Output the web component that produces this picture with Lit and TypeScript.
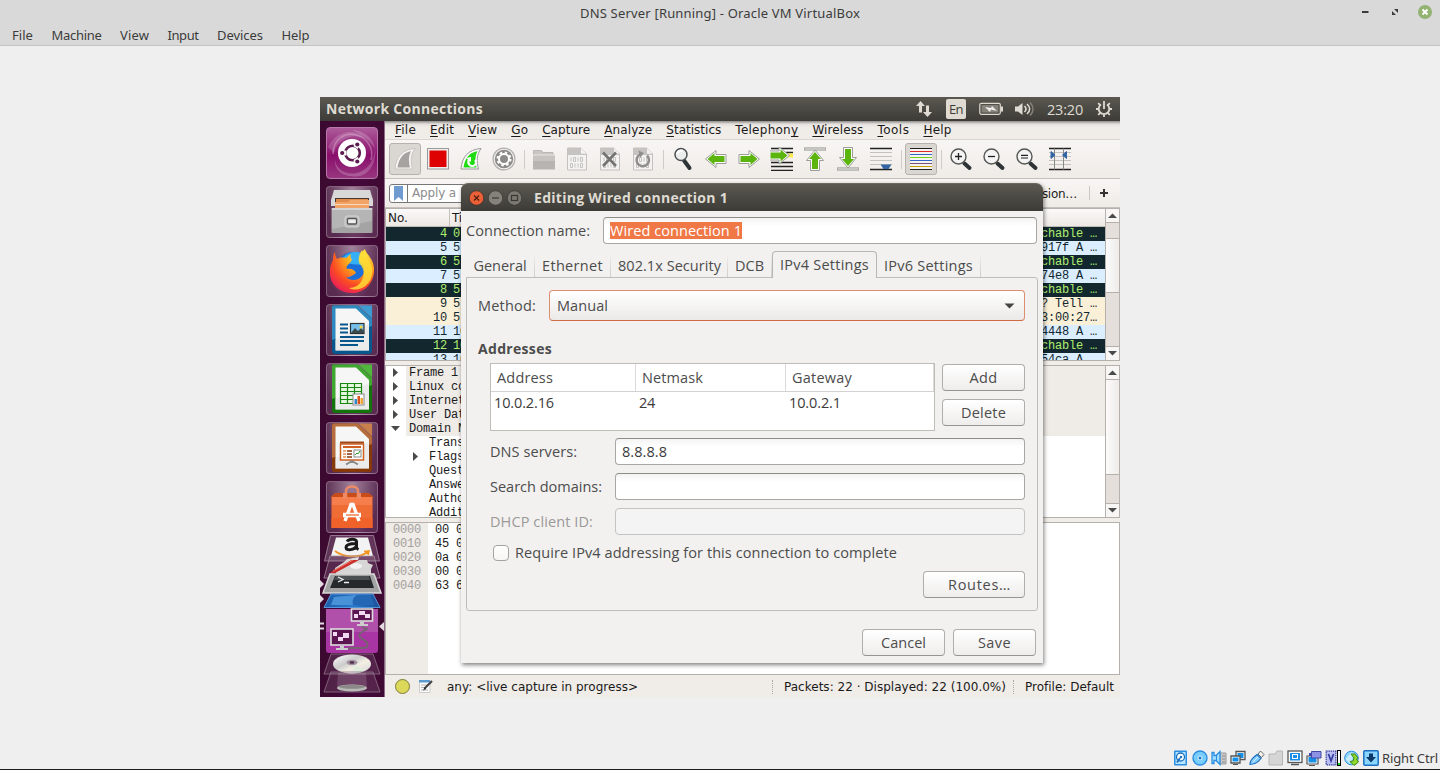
import { LitElement, html, svg, css } from "lit";
import { customElement } from "lit/decorators.js";

const FONTS: Record<string, string> = {
  host: '13px "Noto Sans"',
  ui: '14.5px "Open Sans"',
  uib: 'bold 14px "Open Sans"',
  ws: '12px "DejaVu Sans"',
};
const ruler = document.createElement("canvas").getContext("2d")!;

/* Text tracked so that it takes exactly `width` pixels. */
function fit(text: string, width: number, font: string, accel = -1) {
  ruler.font = FONTS[font];
  const ls = (width - ruler.measureText(text).width) / text.length;
  const body = accel < 0
    ? text
    : html`${text.slice(0, accel)}<u>${text[accel]}</u>${text.slice(accel + 1)}`;
  return html`<span class="t ${font}" style="width:${width}px;letter-spacing:${ls.toFixed(3)}px">${body}</span>`;
}

const base = css`
  *, *::before, *::after { box-sizing: border-box; }
  .t { display: inline-block; white-space: pre; flex: none; }
  .host { font: 13px "Noto Sans", sans-serif; }
  .ui { font: 14.5px "Open Sans", sans-serif; }
  .uib { font: bold 14px "Open Sans", sans-serif; }
  .ws { font: 12px "DejaVu Sans", sans-serif; }
  svg { display: block; flex: none; }
  u { text-underline-offset: 2px; text-decoration-thickness: 1px; }
`;

/* ---------- Launcher ---------- */

const docIcon = (dark: string, light: string, inner: unknown) => svg`
  <path d="M7 1.500H32L46 15V47a3 3 0 0 1-3 3H9a3 3 0 0 1-3-3V3a1.500 1.500 0 0 1 1-1.500z" fill="${dark}"/>
  <path d="M7 1.500H32L46 15V22L6 36V3z" fill="${light}" opacity=".75"/>
  <path d="M9.500 4.500H30L43 17V46.500H9.500z" fill="#f6f6f6"/>
  <path d="M9.500 36L43 20V46.500H9.500z" fill="#e4e4e4" opacity=".6"/>
  <path d="M33 1.500H46V14.500z" fill="${light}"/>
  ${inner}`;

const tiles: [string, unknown][] = [
  ["dash", svg`
    <path d="M7 27C7 12 19 5 30 8c12 3 18 14 15 25" fill="none" stroke="#d59bc8" stroke-width="1.500" opacity=".5"/>
    <path d="M2 20C8 7 22 2 34 7l8 6C30 5 12 10 8 26z" fill="#fff" opacity=".17"/>
    <path d="M9 33c2 12 15 17 27 11 8-4 13-14 13-24 2 14-4 26-15 29C21 51 8 46 9 33z" fill="#fff" opacity=".2"/>
    <path d="M26 3c12 0 22 9 23 19-5-9-14-15-23-19z" fill="#fff" opacity=".2"/>
    <circle cx="26" cy="26" r="14" fill="#fff"/>
    <circle cx="26.500" cy="26" r="7.300" fill="none" stroke="#5c1a4e" stroke-width="2.600"/>
    <path d="M20.500 26h-5M29.500 20.500l2-3M29.500 31.500l2 3" stroke="#fff" stroke-width="5"/>
    <circle cx="16.200" cy="26" r="2.100" fill="#5c1a4e"/><circle cx="31.300" cy="17.500" r="2.100" fill="#5c1a4e"/><circle cx="31.300" cy="34.500" r="2.100" fill="#5c1a4e"/>`],
  ["", svg`
    <path d="M8 4H44L47 14V20H5V14z" fill="#d8d8d8"/><path d="M9 12H43V24H9z" fill="#4a3a34"/>
    <path d="M10 13H42V20H10z" fill="#e08a4c"/><path d="M9 16H22l2-2H43V24H9z" fill="#f0a468"/><path d="M9 18.500H43" stroke="#fbd9b8"/>
    <path d="M5.500 22H46.500V46a1 1 0 0 1-1 1h-39a1 1 0 0 1-1-1z" fill="#a4a4a4"/><path d="M6 22H46V24H6z" fill="#d4d4d4"/>
    <path d="M6 24H46V35L6 43z" fill="#b5b5b5"/>
    <rect x="19" y="30" width="14" height="11" rx="2" fill="#bcbcbc" stroke="#d4d4d4"/><rect x="21.500" y="32.500" width="9" height="5.500" rx="1" fill="#eee" stroke="#555" stroke-width="1.300"/>`],
  ["", svg`
    <defs><radialGradient id="ff" cx=".72" cy=".15" r=".95"><stop offset="0" stop-color="#fff04a"/><stop offset=".4" stop-color="#ffa51c"/><stop offset=".72" stop-color="#fb4a25"/><stop offset="1" stop-color="#e91a5c"/></radialGradient></defs>
    <circle cx="27" cy="23" r="16" fill="#1c6fd8"/><path d="M17 13c5-7 16-8 22-3L36 20 25 19z" fill="#35b0f4"/>
    <path d="M9 7c0 3 1 5 2 7 2-1 5-2 9-1l5-4c-1 3 0 4 1 6l-3 4c-2 1-3 3-2 5 4-1 8 1 9 4-3 2-6 5-10 4 4 4 12 4 16-1 4-5 3-11-3-15 0-5 2-9 6-12 1 5 8 9 9 19 1 14-9 25-22 25C12 48 3 38 4 26c0-6 2-9 3-11 0-3 0-5 2-8z" fill="url(#ff)"/>
    <path d="M36 5c-3 4-4 8-3 13 5 5 6 11 3 17-2 5-8 8-13 8 10 5 22-3 23-14C48 18 39 13 36 5z" fill="#ffdb35" opacity=".85"/>`],
  ["", docIcon("#07568c", "#3c9bd0", svg`
    <path d="M14 20.500h8M14 24.500h8M14 28.500h8M14 33h24M14 37h24M14 41h18" stroke="#07568c" stroke-width="2"/>
    <rect x="24.500" y="19.500" width="13.500" height="10" fill="#74c0ea" stroke="#2e3436" stroke-width="1.200"/><path d="M25 29l4-5 3 3 3-3 3 3v2z" fill="#3b4a4c"/><circle cx="35" cy="23" r="1.600" fill="#f8d53a"/>`)],
  ["", docIcon("#14740c", "#4fb83c", svg`
    <rect x="14" y="20" width="22" height="20" fill="#e5f7df"/><path d="M14 20.500h22M14 24.500h22M14 28.500h22M14 32.500h22M14 36.500h22M14 40.500h22M14.500 20v21M21.500 20v20M28.500 20v20M35.500 20v20" stroke="#18860f" stroke-width="1.200"/>
    <rect x="27" y="31" width="11" height="11" fill="#fff" stroke="#888"/><path d="M28.500 36h2.500v5h-2.500z" fill="#2e88c8"/><path d="M31.500 33h2.500v8h-2.500z" fill="#d8521c"/><path d="M34.500 35h2.500v6h-2.500z" fill="#efa530"/>`)],
  ["", docIcon("#85390b", "#c87f4c", svg`
    <rect x="14.500" y="22" width="23" height="16" fill="#fff" stroke="#d05f20" stroke-width="1.500"/><path d="M14 20.500h24" stroke="#a0481a" stroke-width="2"/><path d="M17 25h18" stroke="#d05f20" stroke-width="2"/>
    <path d="M17 29h3M17 32h3M17 35h3" stroke="#e48a50" stroke-width="1.600"/><path d="M21 29h5M21 32h5M21 35h5" stroke="#85390b" stroke-width="1.600"/>
    <rect x="28" y="28" width="7" height="7" fill="#fff" stroke="#888"/><path d="M29 33l2-2 1 1 2-3" stroke="#299b26" fill="none"/>
    <path d="M26 38v2M26 39l-6 3.500M26 39l6 3.500" stroke="#888" stroke-width="2"/>`)],
  ["", svg`
    <path d="M5.500 15H46.500V47H5.500z" fill="#ef6c35"/><path d="M5.500 37H46.500V47H5.500z" fill="#f0622a"/><path d="M5.500 15L9 12H43L46.500 15V17H5.500z" fill="#c84c1a"/><path d="M6 16H46V24H6z" fill="#f57e4c"/>
    <path d="M20 17V10c0-6 12-6 12 0v7" fill="none" stroke="#ef8a66" stroke-width="2.500"/><path d="M18 18v-6M34 18v-6" stroke="#ef8a66" stroke-width="2"/>
    <path d="M19 40L25 23.500H27L33 40" fill="none" stroke="#fff" stroke-width="3.400"/><path d="M17 34H35" stroke="#fff" stroke-width="4.500"/><path d="M20 34h13" stroke="#ef6c35" stroke-width="1.300"/>`],
];

@customElement("unity-launcher")
class UnityLauncher extends LitElement {
  static styles = [base, css`
    :host { display: flex; flex-direction: column; width: 65px; padding-top: 6px; background: linear-gradient(90deg, #3b0a30, #45083a 60%, #3e0a33); border-right: 1px solid #8f6a87; overflow: hidden; }
    .tile { flex: none; width: 52px; height: 52px; margin: 0 0 7px 6px; border-radius: 4px; border: 1px solid rgba(255,255,255,.25); background: radial-gradient(ellipse at 50% 0, rgba(255,255,255,.5), rgba(255,255,255,.14) 80%); }
    .tile svg { margin: -1px; }
    .dash { background: linear-gradient(#ad5b9a, #8a0f6c 55%, #97367f); border-color: #b878aa; }
    .stack { margin-top: -6px; }
  `];
  render() {
    return html`${tiles.map(([c, i]) => html`<div class="tile ${c}"><svg width="52" height="52" viewBox="0 0 52 52">${i}</svg></div>`)}
      <svg class="stack" width="64" height="163" viewBox="0 0 64 163">
        <defs>
          <linearGradient id="cd" x1="0" y1="0" x2="1" y2="1"><stop offset="0" stop-color="#fff"/><stop offset=".4" stop-color="#ccc"/><stop offset=".6" stop-color="#f4efe4"/><stop offset="1" stop-color="#d5d5d8"/></linearGradient>
          <linearGradient id="bl" x1="0" y1="0" x2="1" y2="0"><stop offset="0" stop-color="#1d5ca8"/><stop offset=".5" stop-color="#2a7ad0"/><stop offset="1" stop-color="#1c4f96"/></linearGradient>
        </defs>
        <path d="M10.500 1.500H53.500L59.500 27H4.500z" fill="#fff" fill-opacity=".18" stroke="#a58b9e" stroke-width=".8"/>
        <path d="M16 3.500H48L53 22H11z" fill="#f3f3f3"/>
        <path d="M27 7.500c2-3 9-3 9.500 0v6c0 1 1 1.500 2 2M36 9.500c-8 0-10 1.500-10 4 0 4 9 2 10-1" fill="none" stroke="#1a1a1a" stroke-width="3"/>
        <path d="M15 17c9 7 24 7 33 1M44 17.500l5-.5-1 4" fill="none" stroke="#f2941e" stroke-width="1.700"/>
        <path d="M10 22H54L60 44H4z" fill="#fff" fill-opacity=".13" stroke="#a58b9e" stroke-width=".8"/>
        <path d="M24 28l3-3 7-1 4 2 9 0 1 3 5 2-2 4 0 5H16l-1-6z" fill="#d6d6d6"/><ellipse cx="36" cy="32" rx="6" ry="3" fill="#f2f2f2"/>
        <path d="M11 38L34 24.500l5 1.500L16 38.500c-2 1.500-6 1.500-5-.5z" fill="#cc2f2a"/><path d="M13 37L33 26" stroke="#ee7a70"/><path d="M31 26l2-2 6-1-1 3z" fill="#dedede"/>
        <path d="M10 40H54L61 59H3z" fill="#a3a3a3"/><path d="M10 40H54L61 59H3z" fill="none" stroke="#d9d9d9" stroke-width="1.500"/>
        <path d="M15 42H50L54 54H10z" fill="#25292b"/><path d="M16 42h33l1 4H14z" fill="#4b5052"/><path d="M18 43l5 2.500-5 2.500M24 48.500h5" stroke="#eee" stroke-width="1.300" fill="none"/>
        <path d="M11 60H53L60 73.500H4z" fill="url(#bl)" stroke="#5697db"/><path d="M15 61H50L54 71H10z" fill="#2367b5"/><path d="M36 62c-3 1-4 5-3 9H11l3-8 22-2z" fill="#58a0e4" opacity=".75"/>
        <path d="M6 75H58V116a3 3 0 0 1-3 3H9a3 3 0 0 1-3-3z" fill="#a934a3"/><path d="M6 75H58V98H6z" fill="#b45cad" opacity=".7"/>
        <rect x="31.500" y="75" width="21" height="12" fill="#5d1552" stroke="#ddd" stroke-width="1.600"/><path d="M34 80h4v4h-4zM39 77h6v4h-6zM45 80h5v4h-5z" fill="#f1d9ef"/><path d="M40 88h4v2h4v2H37v-2h3z" fill="#ccc"/>
        <path d="M28 114h15c7 0 5-6 1-8-6-3-6-6-2-8l5-3-5-2" fill="none" stroke="#74646f" stroke-width="1.800"/>
        <rect x="11" y="95" width="22" height="16" fill="#5d1552" stroke="#ddd" stroke-width="1.600"/><path d="M13 98h4v4h-4zM18 103h5v4h-5zM23 99h6v5h-6z" fill="#f1d9ef"/><path d="M20 112h4v2h4v2H16v-2h4z" fill="#ccc"/>
        <path d="M11 120H53L60 140H4z" fill="#fff" fill-opacity=".1" stroke="#8f7389" stroke-width=".8"/>
        <ellipse cx="32" cy="130" rx="19" ry="9.500" fill="url(#cd)"/><path d="M32 130l13 6c-4 3-8 3-10 3z" fill="#d8f0d8" opacity=".7"/><ellipse cx="32" cy="128.500" rx="5.500" ry="2.800" fill="#a593a3"/><ellipse cx="32" cy="128.500" rx="2.500" ry="1.300" fill="#4b2e46"/>
        <path d="M11 138H53L60 158H4z" fill="#fff" fill-opacity=".1" stroke="#8f7389" stroke-width=".8"/>
        <path d="M18 139H46L47 153H17z" fill="#fff" opacity=".15"/><ellipse cx="32" cy="154" rx="15" ry="3.500" fill="#b9bab8"/><ellipse cx="32" cy="152.800" rx="13" ry="2" fill="#8b8a89"/>
        <path d="M0 46l4 4-4 4zM0 61l4 4-4 4zM0 88.500h4v2H0zM0 93.500h4v2H0zM64 88v9l-5-4.500z" fill="#e5dce3"/>
      </svg>`;
  }
}

/* ---------- Wireshark ---------- */

const arrow = (rot: number, cx = 12, cy = 12) => svg`
  <path transform="translate(${cx} ${cy}) rotate(${rot})" d="M-10 -4.500H0V-8.500L10.500 0 0 8.500V4.500H-10z" fill="#fff" stroke="#9b9d96" stroke-width="1" stroke-linejoin="round"/>
  <path transform="translate(${cx} ${cy}) rotate(${rot})" d="M-8.500 -3H1.500V-6L8.500 0 1.500 6V3H-8.500z" fill="#5cb40e"/>`;
const page = svg`
  <path d="M2.500 1H16L21.500 6.500V23H2.500z" fill="#f3f2f1" stroke="#c4c2bf"/><path d="M2.500 1H16V6.500H21.500V8H2.500z" fill="#c6c4c1"/><path d="M16 1V6.500h5.500z" fill="#f3f2f1"/>
  <path d="M6 10.500v4M8.500 10.500h2v4h-2zM13 10.500v4M15.500 10.500h2v4h-2zM5.500 16.500h2v4h-2zM10 16.500v4M13 16.500v4M15.500 16.500h2v4h-2z" fill="none" stroke="#c0bebb" stroke-width=".9"/>`;
const lens = (inner: unknown) => svg`
  <path d="M15.500 16.500L20.500 21" stroke="#2e3436" stroke-width="4" stroke-linecap="round"/><circle cx="9.500" cy="9.500" r="7.500" fill="#f4f4f4" stroke="#555753" stroke-width="1.400"/>${inner}`;
const fin = "M2 22C3 10 9 2.500 22 1.500 17.500 8 17.500 14 19.500 22z";

const tools: [string, unknown][] = [
  ["on", svg`<path d="${fin}" fill="#f6f5f4" stroke="#c9c5c1"/><path d="M4.500 20.500C6 11 10 6 18 4 15.500 9 15.500 14 17 20.500z" fill="#a5a29f"/>`],
  ["", svg`<rect x="1.500" y="1.500" width="21" height="20.500" fill="#eee" stroke="#9a9a9a"/><rect x="3.500" y="3.500" width="17" height="16.500" fill="#de0202"/>`],
  ["", svg`<path d="${fin}" fill="#fafafa" stroke="#999"/><path d="M4.500 20.500C6 11 10 6 18.500 4 16 9 16 14 17.500 20.500z" fill="#1edc10"/><path d="M10 12.500c-2 4 1 7 4 6.500 3-.5 4-4 2-6" fill="none" stroke="#fff" stroke-width="2.200"/><path d="M7 11l5-1 0 5z" fill="#fff"/>`],
  ["", svg`<circle cx="12" cy="12" r="10.900" fill="#f4f4f3" stroke="#b1afac" stroke-width="1.200"/><circle cx="12" cy="12" r="9.200" fill="#8d8b89"/><circle cx="12" cy="12" r="5" fill="none" stroke="#fff" stroke-width="2"/><circle cx="12" cy="12" r="6.500" fill="none" stroke="#fff" stroke-width="2" stroke-dasharray="2.500 2.600"/>`],
  ["|", 0],
  ["", svg`<path d="M1.500 5V3.500h8l1.500 2h10V9h-19.500z" fill="#c9c6c3" stroke="#b9b6b3"/><rect x="1" y="8" width="22" height="14.500" fill="#b7b4b1"/><rect x="1" y="8" width="22" height="6" fill="#c6c3c0"/><path d="M1 8h22" stroke="#e6e4e2"/>`],
  ["", page],
  ["", svg`${page}<path d="M5 5.500L18 19M18 5.500L5 19" stroke="#757370" stroke-width="2.600"/>`],
  ["", svg`${page}<path d="M16 8.500a6.200 6.200 0 1 1-7-1" fill="none" stroke="#908e8b" stroke-width="2.500"/><path d="M7.500 3.500l5.500 2.500-4 5z" fill="#908e8b"/>`],
  ["|", 0],
  ["", svg`<path d="M13 13.500L18.500 21" stroke="#2e3436" stroke-width="4" stroke-linecap="round"/><circle cx="10" cy="7.500" r="6" fill="#ececec" stroke="#4c5052" stroke-width="1.500"/><path d="M6 7c1-3 4-4 6-3" stroke="#fff" stroke-width="2" fill="none"/>`],
  ["", arrow(180)],
  ["", arrow(0)],
  ["", svg`<path d="M1 1.500h22M16 5.500h7M1 15.500h22M1 19.500h22M1 23.300h22" stroke="#222" stroke-width="1.300"/><path d="M1 11.500h14" stroke="#bbb"/><path d="M14 6.500h9v4h-9z" fill="#fce94f"/>${arrow(0, 9, 8.500)}`],
  ["", svg`<path d="M1 2h22" stroke="#8e9089" stroke-width="3"/><path d="M1.500 2h21" stroke="#fff"/>${arrow(-90, 12, 13.500)}`],
  ["", svg`<path d="M1 22h22" stroke="#8e9089" stroke-width="3"/><path d="M1.500 22h21" stroke="#fff"/>${arrow(90, 12, 10.500)}`],
  ["", svg`<path d="M1 1.500h22M1 22.500h22" stroke="#222" stroke-width="1.400"/><path d="M1 5.500h22M1 9.500h22M1 13.500h22M1 17.500h22" stroke="#c4c2bf" stroke-width="1"/><path d="M11.500 17.500h11l-3 4.500h-5z" fill="#3465a4"/>`],
  ["|", 0],
  ["on", svg`<path d="M1 2h22v20.500H1z" fill="#f4f3f2"/><path d="M1 1.500h22M1 22.500h22" stroke="#222" stroke-width="1"/><path d="M1 4.500h22" stroke="#e02a2a"/><path d="M1 7.500h22M1 13.500h22" stroke="#3465c4"/><path d="M1 10.500h22" stroke="#73d216"/><path d="M1 16.500h22" stroke="#75507b"/><path d="M1 19.500h22" stroke="#c4a000"/>`],
  ["|", 0],
  ["", lens(svg`<path d="M6 9.500h7M9.500 6v7" stroke="#222" stroke-width="1.300"/>`)],
  ["", lens(svg`<path d="M6 9.500h7" stroke="#222" stroke-width="1.300"/>`)],
  ["", lens(svg`<path d="M6 8.300h7M6 11h7" stroke="#222" stroke-width="1.200"/>`)],
  ["", svg`<path d="M1 5.500h22M1 9.500h22M1 13.500h22M1 17.500h22" stroke="#c4c2bf" stroke-width="1"/><path d="M1 1.500h22M1 22.500h22" stroke="#222" stroke-width="1.400"/><path d="M6.500 1.500v21M15.500 1.500v21" stroke="#888a85"/><path d="M3 4.500l4 3.500-4 3.500zM18.500 4.500L14.500 8l4 3.500z" fill="#3465a4" stroke="#3465a4"/>`],
];

const menus: [string, number, number][] = [
  ["File", 21, 0], ["Edit", 24, 0], ["View", 29, 0], ["Go", 17, 0], ["Capture", 48, 0], ["Analyze", 48, 0],
  ["Statistics", 55, 0], ["Telephony", 63, 8], ["Wireless", 51, 0], ["Tools", 32, 0], ["Help", 28, 0],
];
const packets = [
  ["4", "0", "chable …", "err"], ["5", "5", "917f A …", "dns"], ["6", "5", "chable …", "err"], ["7", "5", "74e8 A …", "dns"],
  ["8", "5", "chable …", "err"], ["9", "5", "? Tell …", "arp"], ["10", "5", "3:00:27…", "arp"], ["11", "10", "4448 A …", "dns"],
  ["12", "10", "chable …", "err"], ["13", "10", "54ca A …", "dns"],
];
const tree: [string, string, string][] = [
  ["Frame 1", "top", "r"], ["Linux co", "top", "r"], ["Internet", "top", "r"], ["User Dat", "top", "r"], ["Domain N", "top", "d"],
  ["Trans", "sub", ""], ["Flags", "sub", "r"], ["Quest", "sub", ""], ["Answe", "sub", ""], ["Autho", "sub", ""], ["Addit", "sub", ""],
];
const hex = [["0000", "00 0"], ["0010", "45 0"], ["0020", "0a 0"], ["0030", "00 0"], ["0040", "63 6"]];

const tri = (d: string) => html`<svg width="9" height="9" viewBox="0 0 9 9"><path d="${d}" fill="#4a4a4a"/></svg>`;
const UP = "M0 7L4.500 2.500 9 7z", DOWN = "M0 2L4.500 6.500 9 2z", RIGHT = "M2 0v9l5-4.500z", OPEN = "M0 2h9L4.500 7z";

@customElement("shark-window")
class SharkWindow extends LitElement {
  static styles = [base, css`
    :host { display: flex; flex-direction: column; flex: 1; min-width: 0; background: #f0ece8; color: #1a1a1a; }
    .menu { display: flex; gap: 14.05px; height: 19px; padding: 2px 0 0 10px; background: linear-gradient(#8d8b88, #e2dfdc 3px, #f0ece8 6px); border-bottom: 1px solid #dbd6d1; }
    .tools { display: flex; align-items: center; height: 39px; padding-left: 4px; background: linear-gradient(#f8f6f4, #efebe7); border-bottom: 1px solid #c5c0bb; }
    .tool { display: flex; align-items: center; justify-content: center; width: 32px; height: 32px; margin-right: 1px; border: 1px solid transparent; border-radius: 3px; }
    .on { background: #dad7d3; border-color: #b6b2ae; }
    .sep { width: 1px; height: 19px; margin: 0 3px; background: #d0cbc6; }
    .filter { display: flex; align-items: center; height: 29px; padding: 0 11px 0 4px; border-bottom: 1px solid #c5c0bb; background: linear-gradient(#f8f6f4, #efebe7); }
    .entry { display: flex; align-items: center; width: 600px; height: 19px; border: 1px solid #777; border-radius: 3px; background: #fff; color: #8c8c8c; }
    .mark { display: flex; justify-content: center; align-items: center; width: 18px; height: 17px; border-right: 1px solid #777; margin-right: 4px; }
    .expr { margin-left: auto; }
    .fsep { width: 1px; height: 14px; background: #ccc7c2; margin: 0 9px 0 12px; }
    .pane { display: flex; height: 153px; border: 1px solid #b5b0ab; background: #fff; overflow: hidden; font: 12px/14px "Liberation Mono", monospace; letter-spacing: -.2px; }
    .body { flex: 1; min-width: 0; overflow: hidden; }
    .head { display: flex; height: 18px; background: linear-gradient(#fbfafa, #ece8e4); border-bottom: 1px solid #c0bbb6; font: 12px/17px "DejaVu Sans", sans-serif; letter-spacing: -.1px; }
    .h1 { width: 64px; padding: 1px 0 0 2px; border-right: 1px solid #c5c0bb; } .h2 { padding: 1px 0 0 2px; }
    .row { display: flex; height: 14px; white-space: pre; }
    .no { width: 61px; text-align: right; } .tm { margin-left: 6px; } .info { margin-left: auto; margin-right: 8px; }
    .err { background: #12272e; color: #b0ee70; } .dns { background: #daeeff; color: #12272e; } .arp { background: #faf0d7; color: #12272e; }
    .bar { width: 14px; border-left: 1px solid #b5b0ab; background: #e4dfdb; display: flex; flex-direction: column; }
    .btn { height: 14px; display: flex; align-items: center; justify-content: center; background: #f8f6f5; border-bottom: 1px solid #b5b0ab; }
    .btn.dn { margin-top: auto; border-bottom: 0; border-top: 1px solid #b5b0ab; }
    .thumb { background: linear-gradient(90deg, #fcfbfb, #eeebe8); border: solid #b5b0ab; border-width: 1px 0; }
    .list .thumb { margin-top: 15px; height: 55px; } .details .thumb { height: 95px; border-top: 0; }
    .details { margin-top: 4px; } .bytes { margin-top: 4px; }
    .tr { display: flex; align-items: center; height: 14px; white-space: pre; }
    .ar { display: flex; justify-content: center; width: 20px; padding-right: 2px; margin-top: -1px; }
    .sub .ar { margin-left: 20px; width: 20px; }
    .lbl { flex: 1; padding-left: 3px; } .top .lbl { background: #efebe7; }
    .off { width: 42px; padding: 0 0 0 7px; background: #efebe7; color: #a3a09d; white-space: pre; }
    .hx { padding-left: 7px; white-space: pre; }
    .status { display: flex; align-items: center; height: 22px; padding: 1px 6px 0 9px; }
    .led { width: 15px; height: 15px; border-radius: 50%; border: 1px solid #7f7d3a; background: #dcd85a; margin: -1px 8px 0 1px; }
    .note { margin: -2px 13px 0 0; }
    .dots { width: 0; height: 14px; border-left: 1px dotted #aaa; }
    .d1 { margin: 0 11px 0 auto; } .d2 { margin: 0 11px 0 7px; }
  `];
  bar() {
    return html`<div class="bar"><div class="btn">${tri(UP)}</div><div class="thumb"></div><div class="btn dn">${tri(DOWN)}</div></div>`;
  }
  render() {
    return html`
      <div class="menu">${menus.map(([n, w, a]) => fit(n, w, "ws", a))}</div>
      <div class="tools">${tools.map(([c, i]) => c === "|" ? html`<div class="sep"></div>` : html`<div class="tool ${c}"><svg width="24" height="24" viewBox="0 0 24 24">${i}</svg></div>`)}</div>
      <div class="filter">
        <div class="entry"><div class="mark"><svg width="9" height="15" viewBox="0 0 9 15"><path d="M0 0H9V15L4.500 11 0 15z" fill="#6f9bd0"/></svg></div>${fit("Apply a", 44, "ws")}</div>
        <div class="expr">${fit("Expression…", 74, "ws")}</div><div class="fsep"></div>
        <svg width="10" height="10" viewBox="0 0 10 10"><path d="M5 1v8M1 5h8" stroke="#333" stroke-width="2"/></svg>
      </div>
      <div class="pane list"><div class="body">
        <div class="head"><div class="h1">No.</div><div class="h2">Ti</div></div>
        ${packets.map(p => html`<div class="row ${p[3]}"><span class="no">${p[0]}</span><span class="tm">${p[1]}</span><span class="info">${p[2]}</span></div>`)}
      </div>${this.bar()}</div>
      <div class="pane details"><div class="body">
        ${tree.map(([l, c, a]) => html`<div class="tr ${c}"><span class="ar">${a ? tri(a === "r" ? RIGHT : OPEN) : ""}</span><span class="lbl">${l}</span></div>`)}
      </div>${this.bar()}</div>
      <div class="pane bytes"><div class="off">${hex.map(h => html`<div>${h[0]}</div>`)}</div><div class="hx">${hex.map(h => html`<div>${h[1]}</div>`)}</div></div>
      <div class="status"><div class="led"></div>
        <svg class="note" width="16" height="16" viewBox="0 0 16 16"><path d="M1.500 2.500H12V14.500H1.500z" fill="#fafafa" stroke="#ccc"/><path d="M1 2h11v2.500H1z" fill="#5b9bd0"/><path d="M3 7h6M3 9.500h5M3 12h7" stroke="#b5b5b5"/><path d="M6.500 10.500L14 3" stroke="#444" stroke-width="2.200"/><path d="M5 12.500l1.500-3 1.500 1.500z" fill="#222"/></svg>
        ${fit("any: <live capture in progress>", 191, "ws")}
        <div class="dots d1"></div>${fit("Packets: 22 · Displayed: 22 (100.0%)", 222, "ws")}<div class="dots d2"></div>${fit("Profile: Default", 89, "ws")}
      </div>`;
  }
}

/* ---------- Connection editor ---------- */

@customElement("edit-dialog")
class EditDialog extends LitElement {
  static styles = [base, css`
    :host { display: flex; flex-direction: column; width: 582px; height: 480px; background: #f2f1f0; color: #4c4c4c; border-radius: 7px 7px 0 0; box-shadow: 1px 2px 4px rgba(0,0,0,.5); }
    .title { display: flex; align-items: center; height: 28px; padding-left: 8px; border-radius: 7px 7px 0 0; background: linear-gradient(#5a5850, #3c3b37); border-top: 1px solid #6a685f; color: #dfdbd2; }
    .title svg { margin-right: 4px; } .title .t { margin-left: 8px; }
    .name { display: flex; align-items: center; justify-content: space-between; height: 27px; margin: 6px 6px 0 5px; }
    .field { display: flex; align-items: center; height: 27px; padding: 0 6px; border: 1px solid #a9a7a4; border-top-color: #8e8c89; border-radius: 4px; background: linear-gradient(#f4f4f4, #fff 8px); color: #3c3c3c; }
    .main { width: 434px; } .sel { display: flex; align-items: center; height: 17px; background: #f07746; color: #fff; }
    .tabs { display: flex; align-items: flex-end; height: 27px; margin: 7px 5px -1px; z-index: 1; }
    .tab { display: flex; align-items: center; justify-content: center; height: 23px; border-right: 1px solid transparent; border-image: linear-gradient(transparent, #ccc9c6) 1; margin-bottom: 1px; }
    .tab.act { border: 1px solid #b9b7b4; border-image: none; border-bottom: 0; border-radius: 4px 4px 0 0; height: 27px; margin: 0; background: #f2f1f0; padding-bottom: 1px; }
    .w0 { width: 69px; } .w1 { width: 76px; } .w2 { width: 117px; padding-left: 1px; } .w3 { width: 44px; } .w4 { width: 105px; } .w5 { width: 104px; }
    .page { height: 334px; margin: 0 5px; padding: 12px 12px 0 11px; border: 1px solid #bfbdba; border-radius: 0 3px 3px 3px; }
    .method { display: flex; align-items: center; justify-content: space-between; }
    .combo { display: flex; align-items: center; justify-content: space-between; width: 476px; height: 31px; padding: 0 9px 0 7px; border: 1px solid #dc8f70; border-bottom-color: #cf6a42; border-radius: 4px; background: linear-gradient(#fff, #eceae8); }
    .sec { display: flex; margin: 18px 0 4px; height: 20px; }
    .sub { margin-left: 12px; }
    .addr { display: flex; justify-content: space-between; height: 68px; }
    .table { width: 445px; border: 1px solid #bfbdba; background: #fff; }
    .thead, .trow { display: grid; grid-template-columns: 145px 150px 1fr; align-items: center; }
    .thead { height: 28px; border-bottom: 1px solid #d4d2d0; }
    .th { height: 27px; display: flex; align-items: center; padding-left: 6px; border-right: 1px solid #dcdad8; }
    .td { padding-left: 3px; height: 21px; display: flex; align-items: center; color: #3c3c3c; }
    .btns { display: flex; flex-direction: column; gap: 8px; padding-top: 1px; }
    .b { display: flex; align-items: center; justify-content: center; width: 83px; height: 27px; border: 1px solid #b0aeab; border-bottom-color: #969491; border-radius: 4px; background: linear-gradient(#fff, #efedec); }
    .wide { width: 102px; margin-left: auto; margin-top: 9px; padding-left: 11px; }
    .line { display: flex; align-items: center; justify-content: space-between; margin-top: 8px; }
    .line.first { margin-top: 7px; }
    .line .field { width: 410px; }
    .dis { color: #9b9997; } .dis .field { background: #f4f4f4; border-color: #c5c3c1; }
    .check { display: flex; align-items: center; margin-top: 9px; height: 18px; padding-left: 3px; }
    .check .t { margin-top: -2px; }
    .box { width: 16px; height: 16px; border: 1px solid #a5a3a0; border-radius: 4px; background: linear-gradient(#fff, #f6f5f4); margin-right: 6px; }
    .foot { display: flex; justify-content: flex-end; gap: 8px; margin: 18px 7px 0; }
  `];
  render() {
    const tabs: [string, number][] = [["General", 53], ["Ethernet", 61], ["802.1x Security", 103], ["DCB", 29], ["IPv4 Settings", 89], ["IPv6 Settings", 89]];
    return html`
      <div class="title">
        <svg width="15" height="16" viewBox="0 0 15 16"><circle cx="7.500" cy="8" r="7.200" fill="#ea6138" stroke="#3a2a22" stroke-width=".6"/><path d="M5 5.500l5 5M10 5.500l-5 5" stroke="#512010" stroke-width="1.300"/></svg>
        <svg width="15" height="16" viewBox="0 0 15 16"><circle cx="7.500" cy="8" r="7.200" fill="#84827b" stroke="#33322f" stroke-width=".6"/><path d="M4 8h7" stroke="#403f3a" stroke-width="1.300"/></svg>
        <svg width="15" height="16" viewBox="0 0 15 16"><circle cx="7.500" cy="8" r="7.200" fill="#7b7972" stroke="#33322f" stroke-width=".6"/><rect x="4.500" y="5.500" width="6" height="5" fill="none" stroke="#383733" stroke-width="1.200"/></svg>
        ${fit("Editing Wired connection 1", 194, "uib")}
      </div>
      <div class="name">${fit("Connection name:", 124, "ui")}<div class="field main"><span class="sel">${fit("Wired connection 1", 132, "ui")}</span></div></div>
      <div class="tabs">${tabs.map(([n, w], i) => html`<div class="tab w${i} ${i === 4 ? "act" : ""}">${fit(n, w, "ui")}</div>`)}</div>
      <div class="page">
        <div class="method">${fit("Method:", 58, "ui")}<div class="combo">${fit("Manual", 51, "ui")}<svg width="11" height="6" viewBox="0 0 11 6"><path d="M.5 .5h10L5.500 5.500z" fill="#444"/></svg></div></div>
        <div class="sec">${fit("Addresses", 74, "uib")}</div>
        <div class="sub">
          <div class="addr">
            <div class="table">
              <div class="thead"><div class="th">${fit("Address", 56, "ui")}</div><div class="th">${fit("Netmask", 61, "ui")}</div><div class="th">${fit("Gateway", 60, "ui")}</div></div>
              <div class="trow"><div class="td">${fit("10.0.2.16", 60, "ui")}</div><div class="td">${fit("24", 16, "ui")}</div><div class="td">${fit("10.0.2.1", 52, "ui")}</div></div>
            </div>
            <div class="btns"><div class="b">${fit("Add", 28, "ui")}</div><div class="b">${fit("Delete", 45, "ui")}</div></div>
          </div>
          <div class="line first">${fit("DNS servers:", 87, "ui")}<div class="field">${fit("8.8.8.8", 45, "ui")}</div></div>
          <div class="line">${fit("Search domains:", 112, "ui")}<div class="field"></div></div>
          <div class="line dis">${fit("DHCP client ID:", 103, "ui")}<div class="field"></div></div>
          <div class="check"><div class="box"></div>${fit("Require IPv4 addressing for this connection to complete", 382, "ui")}</div>
          <div class="b wide">${fit("Routes…", 63, "ui")}</div>
        </div>
      </div>
      <div class="foot"><div class="b">${fit("Cancel", 45, "ui")}</div><div class="b">${fit("Save", 33, "ui")}</div></div>`;
  }
}

/* ---------- VirtualBox shell ---------- */

const S = "#1a6fc0", F = "#9fdcff", D = "#2b8ee0";
const status = [
  svg`<rect x="1" y=".5" width="13" height="15" rx="1" fill="${D}"/><rect x="2.500" y="2" width="10" height="12" fill="#b8e5ff"/><circle cx="7.500" cy="7" r="4" fill="#fff" stroke="${S}" stroke-width="1.300"/><circle cx="8" cy="7" r="1.200" fill="${S}"/><path d="M7 8l-3 4.500" stroke="${S}" stroke-width="1.800"/>`,
  svg`<circle cx="8" cy="8" r="7" fill="#79cdfb" stroke="${D}" stroke-width="1.400"/><circle cx="8" cy="8" r="2.500" fill="#b6e6ff"/><circle cx="8" cy="8" r="1.300" fill="${S}"/>`,
  svg`<path d="M9 3h6v11H9z" fill="#c9c9c9" stroke="#999"/><path d="M11 6h3M11 9h3M11 12h3" stroke="#888"/><path d="M1 2.500h2v3l2 0 4-4v13l-4-4-2 0v3H1z" fill="${F}" stroke="${D}" stroke-width="1.300"/><path d="M5.500 5v6" stroke="${D}"/>`,
  svg`<path d="M6 1.500h9v8h-9z" fill="#fff" stroke="#555" stroke-width="1.300"/><path d="M7.500 3h6v5h-6z" fill="#1590e8"/><path d="M1 6h9v7H1z" fill="#fff" stroke="#555" stroke-width="1.300"/><path d="M2.500 7.500h6v4h-6z" fill="#1590e8"/><path d="M3 14.500h5" stroke="#555"/>`,
  svg`<path d="M9 4l2.500-3L15 4.500 12.500 7.500z" fill="#f3f3f3" stroke="#666"/><path d="M1 14.500c0-4 2-6 7-10l4 4c-3 4-6 6-11 6z" fill="#84cdfc" stroke="${S}" stroke-width="1.200"/><path d="M4 12l5-5" stroke="#d5f0ff"/>`,
  svg`<path d="M1 15V4h6l2-3h5.500v14z" fill="#d5d5d5" stroke="#b5b5b5"/>`,
  svg`<rect x="1" y="1" width="14" height="11.500" fill="#fff" stroke="#555" stroke-width="1.300"/><rect x="3" y="3" width="10" height="7.500" fill="#1c8ee6"/><rect x="5.500" y="4.500" width="5" height="4" fill="none" stroke="#fff"/><path d="M4 14.500h8" stroke="#555" stroke-width="1.500"/>`,
  svg`<path d="M1 6h11v8H1z" fill="#fff" stroke="#555" stroke-width="1.200"/><path d="M2.500 7h8v5.500h-8z" fill="#1590e8"/><path d="M5.500 1.500h9.500v6.500H5.500z" fill="#8d92e4" stroke="#4149a8"/><path d="M3 3h2v3H3z" fill="#4149a8"/><path d="M3 15.500h6" stroke="#555"/>`,
  svg`<rect x="1.500" y="1.500" width="9" height="13" fill="#b9bdf1"/><rect x="1.200" y="1.200" width="9.600" height="13.600" fill="none" stroke="#343c9e" stroke-width="1.200" stroke-dasharray="1.500 .7"/><path d="M3.500 4l2.500 7 2.500-7" fill="none" stroke="#343c9e" stroke-width="1.700"/><rect x="12.500" y=".5" width="3" height="15" fill="#fff" stroke="#000"/><path d="M13 13h2v2h-2z" fill="#1ad62a"/>`,
  svg`<circle cx="7.500" cy="8" r="6.800" fill="#8bd4fb" stroke="${D}"/><path d="M1.500 9L8 2l1 5-3 7" fill="#c7ebff"/><path d="M7 4h4l3 4-1.500 1 2 3-4.500 3.500-4-4 3-.5 1-3z" fill="#8fd82e" stroke="#3f8a12"/>`,
  svg`<rect x=".8" y=".8" width="14.400" height="14.400" rx="1" fill="#8ad6ff" stroke="${S}" stroke-width="1.500"/><path d="M6 3.500h4V7h3L8 12.500 3 7h3z" fill="#0c3766"/>`,
];

@customElement("app-root")
class AppRoot extends LitElement {
  static styles = [base, css`
    :host { display: flex; flex-direction: column; align-items: center; width: 1440px; height: 770px; background: #efefef; border-bottom: 1px solid #1c1c1c; box-sizing: border-box; overflow: hidden; color: #3c3c3c; }
    .top { width: 100%; height: 46px; background: #d9d9d9; border-bottom: 1px solid #c2c2c2; }
    .caption { display: grid; grid-template-columns: 1fr auto 1fr; align-items: center; height: 26px; }
    .ctl { display: flex; align-items: center; justify-content: flex-end; padding: 0 7px 2px 0; }
    .mn { margin-right: 22px; } .mx { margin-right: 18px; }
    .hmenu { display: flex; gap: 18.500px; padding: 0 0 2px 12px; height: 19px; align-items: center; }
    .guest { display: flex; flex-direction: column; position: relative; width: 800px; height: 600px; margin-top: 51px; overflow: hidden; }
    .panel { display: flex; align-items: center; height: 24px; padding: 0 7px 0 6px; background: linear-gradient(#5a5850, #3c3b37); color: #dfdbd2; }
    .panel .t:first-child { margin-right: auto; padding-bottom: 1px; }
    .panel svg, .en { margin-right: 13px; }
    .en { width: 20px; height: 20px; border-radius: 2px; background: #dfdbd2; color: #3c3b37; font: 13px/20px "Open Sans", sans-serif; text-align: center; letter-spacing: -.5px; }
    .panel .bat { margin-right: 11px; } .panel .vol { margin-right: 12px; } .panel .pw { margin: 0 0 0 12px; }
    .desk { display: flex; height: 576px; }
    .dlg { position: absolute; left: 141px; top: 86px; }
    .bottom { display: flex; align-items: center; align-self: flex-end; gap: 3px; margin-top: auto; padding: 0 2px 0 0; height: 22px; }
  `];
  render() {
    const hm: [string, number][] = [["File", 21], ["Machine", 50], ["View", 29], ["Input", 31], ["Devices", 46], ["Help", 28]];
    return html`
      <div class="top">
        <div class="caption"><span></span>${fit("DNS Server [Running] - Oracle VM VirtualBox", 280, "host")}
          <div class="ctl">
            <svg class="mn" width="7" height="8" viewBox="0 0 7 8"><path d="M0 4h6.500" stroke="#3c3c3c" stroke-width="2"/></svg>
            <svg class="mx" width="8" height="8" viewBox="0 0 8 8"><path d="M3 1h4v4zM1 3v4h4z" fill="#3c3c3c"/></svg>
            <svg width="16" height="16" viewBox="0 0 16 16"><circle cx="8" cy="8" r="7" fill="#92b372"/><path d="M5.500 5.500l5 5M10.500 5.500l-5 5" stroke="#fff" stroke-width="2"/></svg>
          </div></div>
        <div class="hmenu">${hm.map(([n, w]) => fit(n, w, "host"))}</div>
      </div>
      <div class="guest">
        <div class="panel">${fit("Network Connections", 157, "uib")}
          <svg width="18" height="18" viewBox="0 0 18 18"><path d="M5.500 1L10 6H7v6.500H4V6H1zM12.500 17L8 12H11V5.500h3V12h3z" fill="#dfdbd2"/></svg>
          <div class="en">En</div>
          <svg class="bat" width="25" height="14" viewBox="0 0 25 14"><rect x=".8" y="1.300" width="20.500" height="11" rx="1.500" fill="none" stroke="#dfdbd2" stroke-width="1.200"/><path d="M23 4.500v5" stroke="#dfdbd2" stroke-width="2"/><rect x="2.500" y="3" width="17" height="7.600" fill="#85827a"/><path d="M6 5l6 1 1-2 5 5-6-1.500-1 2.500z" fill="#eee"/></svg>
          <svg class="vol" width="20" height="16" viewBox="0 0 20 16"><path d="M0 5.500h3L7.500 2v12L3 10.500H0z" fill="#dfdbd2"/><path d="M9.500 5c2 2 2 4 0 6M12 3c3.500 3 3.500 7 0 10" fill="none" stroke="#dfdbd2" stroke-width="1.600"/><path d="M15 1.500c4 4 4 9 0 13" fill="none" stroke="#85827a" stroke-width="1.600"/></svg>
          ${fit("23:20", 36, "ui")}
          <svg class="pw" width="18" height="18" viewBox="0 0 18 18"><path d="M6 4.500a5.300 5.300 0 1 0 6 0" fill="none" stroke="#dfdbd2" stroke-width="1.800"/><path d="M9 1v8M1 9h2.500M14.500 9H17M3.200 3.200l2 2M14.800 3.200l-2 2M3.200 14.800l2-2M14.800 14.800l-2-2M9 15v2" stroke="#dfdbd2" stroke-width="1.800"/></svg>
        </div>
        <div class="desk"><unity-launcher></unity-launcher><shark-window></shark-window></div>
        <edit-dialog class="dlg"></edit-dialog>
      </div>
      <div class="bottom">${status.map(i => html`<svg width="16" height="16" viewBox="0 0 16 16">${i}</svg>`)}${fit("Right Ctrl", 56, "host")}</div>`;
  }
}
